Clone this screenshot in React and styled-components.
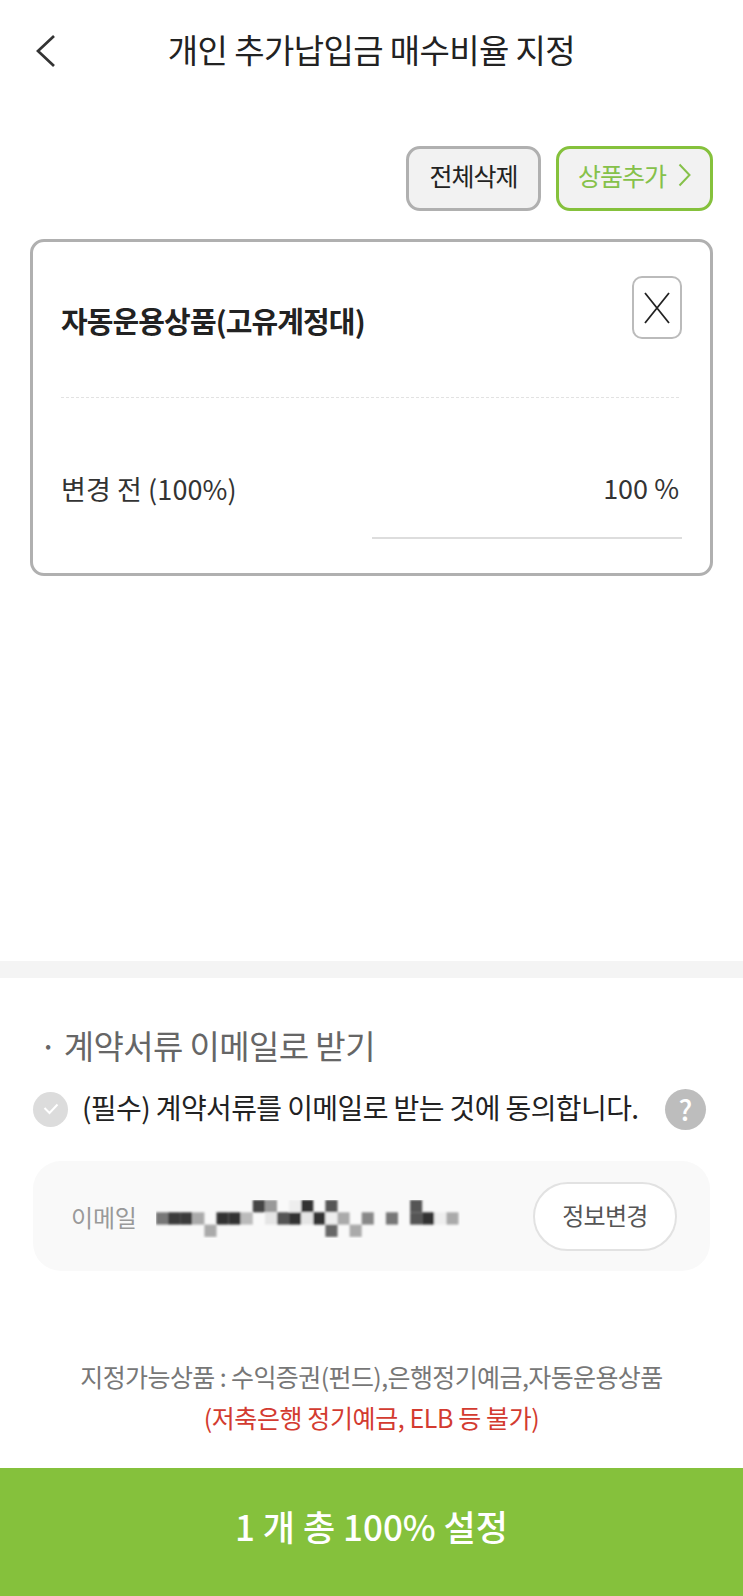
import styled, { createGlobalStyle } from 'styled-components'

const green = '#85c13c'

const GlobalStyle = createGlobalStyle`
  html, body {
    margin: 0;
    padding: 0;
    background: #fff;
    font-family: "Noto Sans CJK KR", "Noto Sans", sans-serif;
  }
  * {
    box-sizing: border-box;
  }
`

const Page = styled.div`
  width: 743px;
  height: 1596px;
  display: flex;
  flex-direction: column;
  overflow: hidden;
`

const Header = styled.header`
  height: 98px;
  display: grid;
  grid-template-columns: 1fr auto 1fr;
  align-items: center;
  padding: 0 35px;
`

const BackIcon = styled.svg`
  margin-top: 4px;
`

const Title = styled.h1`
  margin: 0;
  font-size: 33px;
  font-weight: 400;
  letter-spacing: -0.6px;
  color: #222;
  white-space: nowrap;
`

const Actions = styled.div`
  display: flex;
  justify-content: flex-end;
  gap: 15px;
  margin: 48px 30px 28px 0;
`

const ActionButton = styled.button`
  height: 65px;
  width: ${(p) => (p.$accent ? '157px' : '135px')};
  display: flex;
  align-items: center;
  justify-content: center;
  gap: 12px;
  padding: 0 0 7px;
  border: 3px solid ${(p) => (p.$accent ? green : '#b0b0b0')};
  border-radius: 14px;
  background: #f2f2f2;
  color: ${(p) => (p.$accent ? '#86c14a' : '#222')};
  font-family: inherit;
  font-size: 25px;
  letter-spacing: -1px;
`

const Card = styled.section`
  height: 337px;
  margin: 0 30px;
  padding: 34px 28px 0 28px;
  border: 3px solid #b0b0b0;
  border-radius: 14px;
`

const CardHead = styled.div`
  display: flex;
  align-items: flex-start;
  justify-content: space-between;
  height: 63px;
`

const CardTitle = styled.h2`
  margin: 23px 0 0;
  font-size: 29px;
  font-weight: 700;
  letter-spacing: -0.9px;
  color: #222;
`

const CloseButton = styled.button`
  width: 50px;
  height: 63px;
  display: flex;
  align-items: center;
  justify-content: center;
  padding: 0;
  border: 2px solid #bbb;
  border-radius: 10px;
  background: #fff;
`

const Dashed = styled.div`
  margin: 58px 3px 0 0;
  border-top: 1px dashed #e2e2e2;
`

const ValueRow = styled.div`
  display: grid;
  grid-template-columns: 1fr 310px;
  align-items: center;
  margin-top: 67px;
  font-size: 27px;
  color: #333;
`

const ValueLabel = styled.span`
  letter-spacing: 0.1px;
`

const ValueField = styled.div`
  height: 74px;
  margin-bottom: -28px;
  padding: 5px 3px 0 0;
  text-align: right;
  line-height: 36px;
  border-bottom: 2px solid #ddd;
`

const Spacer = styled.div`
  flex: 1;
`

const Band = styled.div`
  height: 17px;
  background: #f4f4f4;
`

const Agreement = styled.section`
  padding: 44px 33px 0;
`

const SectionTitle = styled.h3`
  margin: 0 0 0 6px;
  font-size: 33px;
  line-height: 46px;
  font-weight: 400;
  letter-spacing: -0.6px;
  color: #666;
  white-space: nowrap;
`

const CheckRow = styled.div`
  display: flex;
  align-items: center;
  margin-top: 18px;
  height: 46px;
`

const CheckCircle = styled.span`
  width: 35px;
  height: 35px;
  flex: none;
  display: flex;
  align-items: center;
  justify-content: center;
  border-radius: 50%;
  background: #dcdcdc;
`

const CheckText = styled.span`
  margin: 0 0 4px 14px;
  font-size: 28px;
  letter-spacing: -0.6px;
  color: #222;
  white-space: nowrap;
`

const Help = styled.span`
  width: 41px;
  height: 41px;
  margin-left: auto;
  margin-right: 4px;
  display: flex;
  align-items: center;
  justify-content: center;
  border-radius: 50%;
  background: #bdbdbd;
  color: #fff;
  font-size: 28px;
  font-weight: 500;
`

const EmailBox = styled.div`
  height: 110px;
  margin-top: 29px;
  display: flex;
  align-items: center;
  padding: 0 33px 0 38px;
  border-radius: 28px;
  background: #f9f9f9;
`

const EmailLabel = styled.span`
  width: 85px;
  font-size: 24px;
  color: #999;
  letter-spacing: -0.2px;
`

const Mosaic = styled.svg`
  display: block;
  margin-top: 6px;
`

const ChangeButton = styled.button`
  width: 144px;
  height: 69px;
  margin-left: auto;
  padding: 0 0 4px;
  border: 2px solid #e2e2e2;
  border-radius: 35px;
  background: #fff;
  color: #555;
  font-family: inherit;
  font-size: 24px;
  letter-spacing: -0.7px;
`

const Notice = styled.div`
  margin: 85px 0 30px;
  text-align: center;
  font-size: 25px;
  line-height: 41px;
  letter-spacing: -0.6px;
  color: #777;
`

const NoticeWarn = styled.div`
  color: #d33b30;
  font-size: 25px;
  letter-spacing: -0.4px;
`

const Submit = styled.button`
  height: 128px;
  flex: none;
  border: 0;
  background: ${green};
  color: #fff;
  font-family: inherit;
  font-size: 35px;
  font-weight: 500;
  padding: 0 0 14px;
`

// censored address: [column, row, colour]
const mosaicCells = [
  [0, 1, '#777'], [1, 1, '#3a3a3a'], [2, 1, '#3a3a3a'], [3, 1, '#aaa'], [4, 2, '#aaa'],
  [5, 1, '#333'], [6, 1, '#333'], [7, 1, '#bbb'], [8, 0, '#444'], [9, 0, '#999'],
  [9, 1, '#e5e5e5'], [10, 1, '#555'], [11, 1, '#333'], [11, 0, '#eee'], [12, 0, '#333'],
  [12, 1, '#e5e5e5'], [13, 1, '#333'], [14, 0, '#555'], [14, 1, '#eee'], [14, 2, '#666'],
  [15, 1, '#aaa'], [16, 2, '#aaa'], [17, 1, '#888'], [19, 1, '#777'], [21, 0, '#555'],
  [21, 1, '#555'], [22, 1, '#333'], [23, 1, '#eee'], [24, 1, '#aaa'],
]

function App() {
  return (
    <Page>
      <GlobalStyle />
      <Header>
        <BackIcon width="22" height="34" viewBox="0 0 22 34" fill="none">
          <path d="M19 2 L3 17 L19 32" stroke="#333" strokeWidth="2.7" />
        </BackIcon>
        <Title>개인 추가납입금 매수비율 지정</Title>
      </Header>
      <Actions>
        <ActionButton>전체삭제</ActionButton>
        <ActionButton $accent>
          상품추가
          <svg width="13" height="24" viewBox="0 0 13 24" fill="none">
            <path d="M1.5 1.5 L11.5 12 L1.5 22.5" stroke="#86c14a" strokeWidth="2" />
          </svg>
        </ActionButton>
      </Actions>
      <Card>
        <CardHead>
          <CardTitle>자동운용상품(고유계정대)</CardTitle>
          <CloseButton aria-label="삭제">
            <svg width="28" height="34" viewBox="0 0 28 34" fill="none">
              <path d="M2 2 L26 32 M26 2 L2 32" stroke="#222" strokeWidth="1.8" />
            </svg>
          </CloseButton>
        </CardHead>
        <Dashed />
        <ValueRow>
          <ValueLabel>변경 전 (100%)</ValueLabel>
          <ValueField>100 %</ValueField>
        </ValueRow>
      </Card>
      <Spacer />
      <Band />
      <Agreement>
        <SectionTitle>· 계약서류 이메일로 받기</SectionTitle>
        <CheckRow>
          <CheckCircle>
            <svg width="16" height="12" viewBox="0 0 16 12" fill="none">
              <path d="M1.5 5 L6.5 10 L14.5 1.5" stroke="#fff" strokeWidth="2" />
            </svg>
          </CheckCircle>
          <CheckText>(필수) 계약서류를 이메일로 받는 것에 동의합니다.</CheckText>
          <Help>?</Help>
        </CheckRow>
        <EmailBox>
          <EmailLabel>이메일</EmailLabel>
          <Mosaic width="304" height="38" viewBox="0 0 304 38">
            <defs>
              <filter id="soft">
                <feGaussianBlur stdDeviation="1" />
              </filter>
            </defs>
            <g filter="url(#soft)">
              {mosaicCells.map(([col, row, fill]) => (
                <rect key={`${col}-${row}`} x={col * 12.1} y={row * 12.3} width="12.1" height="12.3" fill={fill} />
              ))}
            </g>
          </Mosaic>
          <ChangeButton>정보변경</ChangeButton>
        </EmailBox>
      </Agreement>
      <Notice>
        지정가능상품 : 수익증권(펀드),은행정기예금,자동운용상품
        <NoticeWarn>(저축은행 정기예금, ELB 등 불가)</NoticeWarn>
      </Notice>
      <Submit>1 개 총 100% 설정</Submit>
    </Page>
  )
}

export default App
